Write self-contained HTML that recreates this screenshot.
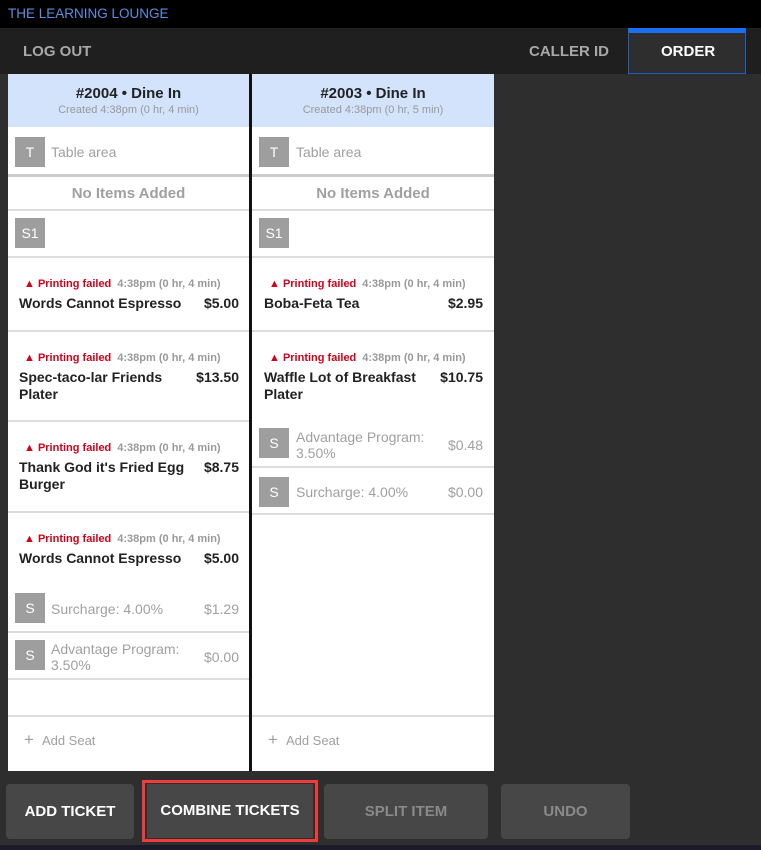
<!DOCTYPE html>
<html><head><style>
*{margin:0;padding:0;box-sizing:border-box}
body{width:761px;height:850px;background:#2e2e2e;font-family:"Liberation Sans",sans-serif;position:relative;overflow:hidden}
.a{position:absolute}
.top{left:0;top:0;width:761px;height:28px;background:#000;color:#5b8fe0;font-size:13.5px;line-height:28px;padding-left:8px}
.nav{left:0;top:28px;width:761px;height:46px;background:#1f1f1f}
.nav span{position:absolute;top:15px;font-weight:bold;font-size:15px;color:#a8a8a8}
.col{top:74px;height:697px;background:#fff;overflow:hidden}
.hd{left:0;top:0;width:100%;height:53px;background:#d3e3fc;text-align:center}
.hd b{display:block;font-size:15px;color:#222;margin-top:11px}
.hd i{display:block;font-style:normal;font-size:11px;color:#999;margin-top:2px}
.ln{left:0;width:100%;height:2px;background:#ddd}
.bx{width:30px;height:30px;background:#9e9e9e;color:#fff;font-size:14px;text-align:center;line-height:30px}
.g{color:#a0a0a0;font-size:14px}
.pf{font-size:11px;font-weight:bold;color:#d0021b}
.pf em{font-style:normal;color:#999;margin-left:6px}
.nm{font-size:14px;font-weight:bold;color:#222;line-height:17px}
.btn{top:784px;height:55px;background:#474747;border-radius:4px;color:#fff;font-weight:bold;font-size:15px;text-align:center;line-height:55px}
.dis{color:#8a8a8a}
</style></head><body>
<div class="a top">THE LEARNING LOUNGE</div>
<div class="a nav"><span style="left:23px">LOG OUT</span><span style="left:529px">CALLER ID</span>
<div class="a" style="left:628px;top:0;width:118px;height:46px;background:#2e2e2e;border:1px solid #1d5fc0;border-top:5px solid #1a6ef0"></div>
<span style="left:661px;color:#fff">ORDER</span></div>
<div class="a" style="left:249px;top:74px;width:3px;height:697px;background:#111"></div>

<!-- left column -->
<div class="a col" style="left:8px;width:241px">
<div class="a hd"><b>#2004 • Dine In</b><i>Created 4:38pm (0 hr, 4 min)</i></div>
<div class="a bx" style="left:7px;top:63px">T</div><div class="a g" style="left:43px;top:70px">Table area</div>
<div class="a ln" style="top:100px;height:3px;background:#ccc"></div>
<div class="a g" style="left:0;width:100%;top:111px;text-align:center;font-weight:bold;font-size:15px">No Items Added</div>
<div class="a ln" style="top:135px"></div>
<div class="a bx" style="left:7px;top:144px">S1</div>
<div class="a ln" style="top:182px"></div>
<div class="a pf" style="left:16px;top:204px">▲ Printing failed<em>4:38pm (0 hr, 4 min)</em></div>
<div class="a nm" style="left:11px;top:221px">Words Cannot Espresso</div><div class="a nm" style="right:10px;top:221px">$5.00</div>
<div class="a ln" style="top:256px"></div>
<div class="a pf" style="left:16px;top:278px">▲ Printing failed<em>4:38pm (0 hr, 4 min)</em></div>
<div class="a nm" style="left:11px;top:295px">Spec-taco-lar Friends<br>Plater</div><div class="a nm" style="right:10px;top:295px">$13.50</div>
<div class="a ln" style="top:346px"></div>
<div class="a pf" style="left:16px;top:368px">▲ Printing failed<em>4:38pm (0 hr, 4 min)</em></div>
<div class="a nm" style="left:11px;top:385px">Thank God it's Fried Egg<br>Burger</div><div class="a nm" style="right:10px;top:385px">$8.75</div>
<div class="a ln" style="top:437px"></div>
<div class="a pf" style="left:16px;top:459px">▲ Printing failed<em>4:38pm (0 hr, 4 min)</em></div>
<div class="a nm" style="left:11px;top:476px">Words Cannot Espresso</div><div class="a nm" style="right:10px;top:476px">$5.00</div>
<div class="a bx" style="left:7px;top:519px">S</div><div class="a g" style="left:43px;top:527px">Surcharge: 4.00%</div><div class="a g" style="right:10px;top:527px">$1.29</div>
<div class="a ln" style="top:557px"></div>
<div class="a bx" style="left:7px;top:566px">S</div><div class="a g" style="left:43px;top:567px;line-height:16px">Advantage Program:<br>3.50%</div><div class="a g" style="right:10px;top:575px">$0.00</div>
<div class="a ln" style="top:604px"></div>
<div class="a ln" style="top:641px"></div>
<div class="a g" style="left:16px;top:656px;font-size:13px"><span style="font-size:17px;margin-right:8px">+</span>Add Seat</div>
</div>

<!-- right column -->
<div class="a col" style="left:252px;width:242px">
<div class="a hd"><b>#2003 • Dine In</b><i>Created 4:38pm (0 hr, 5 min)</i></div>
<div class="a bx" style="left:7px;top:63px">T</div><div class="a g" style="left:44px;top:70px">Table area</div>
<div class="a ln" style="top:100px;height:3px;background:#ccc"></div>
<div class="a g" style="left:0;width:100%;top:111px;text-align:center;font-weight:bold;font-size:15px">No Items Added</div>
<div class="a ln" style="top:135px"></div>
<div class="a bx" style="left:7px;top:144px">S1</div>
<div class="a ln" style="top:182px"></div>
<div class="a pf" style="left:17px;top:204px">▲ Printing failed<em>4:38pm (0 hr, 4 min)</em></div>
<div class="a nm" style="left:12px;top:221px">Boba-Feta Tea</div><div class="a nm" style="right:11px;top:221px">$2.95</div>
<div class="a ln" style="top:256px"></div>
<div class="a pf" style="left:17px;top:278px">▲ Printing failed<em>4:38pm (0 hr, 4 min)</em></div>
<div class="a nm" style="left:12px;top:295px">Waffle Lot of Breakfast<br>Plater</div><div class="a nm" style="right:11px;top:295px">$10.75</div>
<div class="a bx" style="left:7px;top:354px">S</div><div class="a g" style="left:44px;top:355px;line-height:16px">Advantage Program:<br>3.50%</div><div class="a g" style="right:11px;top:363px">$0.48</div>
<div class="a ln" style="top:392px"></div>
<div class="a bx" style="left:7px;top:403px">S</div><div class="a g" style="left:44px;top:410px">Surcharge: 4.00%</div><div class="a g" style="right:11px;top:410px">$0.00</div>
<div class="a ln" style="top:439px"></div>
<div class="a ln" style="top:641px"></div>
<div class="a g" style="left:16px;top:656px;font-size:13px"><span style="font-size:17px;margin-right:8px">+</span>Add Seat</div>
</div>

<div class="a btn" style="left:6px;width:128px">ADD TICKET</div>
<div class="a" style="left:142px;top:780px;width:176px;height:62px;border:3px solid #f23b3b"></div>
<div class="a btn" style="left:147px;top:784px;width:166px;height:54px;border-radius:0;line-height:54px">COMBINE TICKETS</div>
<div class="a btn dis" style="left:324px;width:164px">SPLIT ITEM</div>
<div class="a btn dis" style="left:501px;width:129px">UNDO</div>
<div class="a" style="left:0;top:845px;width:761px;height:5px;background:#1a1a2a"></div>
</body></html>
